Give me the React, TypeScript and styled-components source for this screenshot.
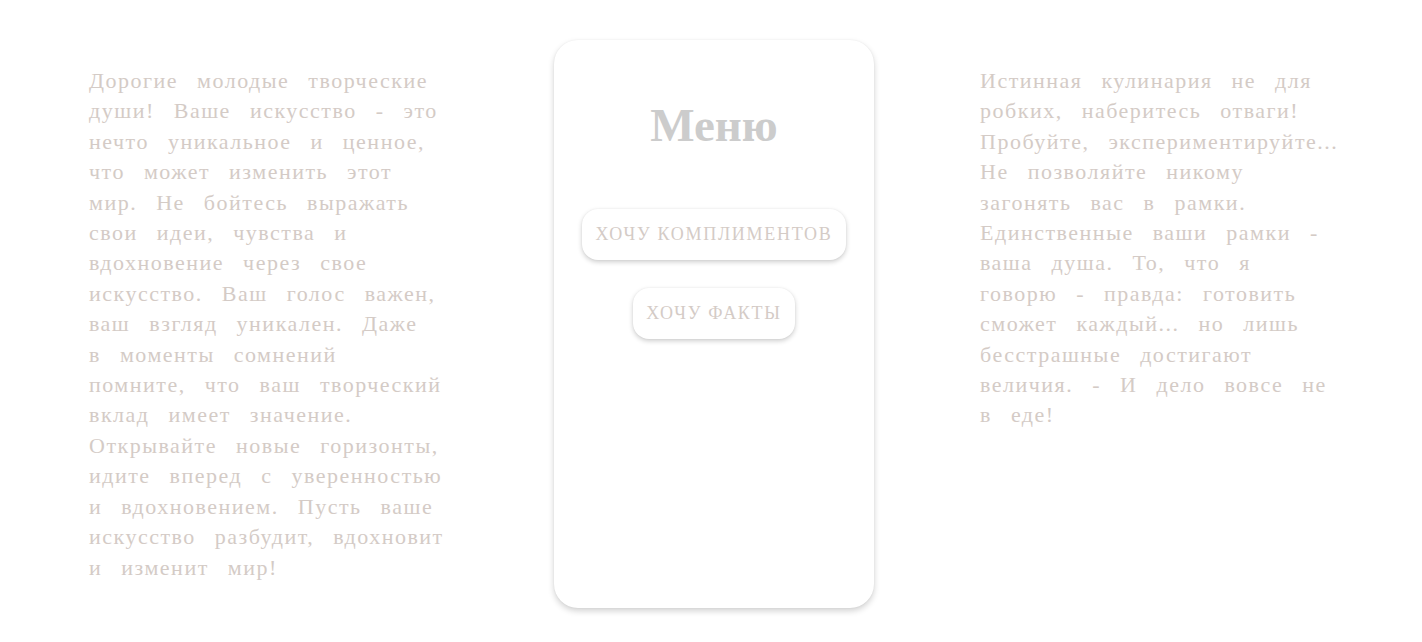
import styled, { createGlobalStyle } from "styled-components";

const GlobalStyle = createGlobalStyle`
  html, body {
    margin: 0;
    padding: 0;
    background: #ffffff;
  }
  body {
    font-family: "Liberation Serif", "DejaVu Serif", serif;
  }
`;

const Page = styled.div`
  display: flex;
  align-items: flex-start;
  padding: 40px 0 0 89px;
  min-height: 642px;
  box-sizing: border-box;
`;

const Prose = styled.p<{ $side: "left" | "right" }>`
  width: 362px;
  margin: 26px 0 0;
  margin-right: ${(p) => (p.$side === "left" ? "103px" : "0")};
  margin-left: ${(p) => (p.$side === "right" ? "106px" : "0")};
  font-family: "Liberation Serif", serif;
  font-size: 22px;
  line-height: 30.4px;
  letter-spacing: 1.5px;
  word-spacing: 12px;
  color: #d4cbc6;
`;

const Line = styled.span`
  display: block;
  white-space: nowrap;
`;

const Card = styled.div`
  width: 320px;
  height: 568px;
  flex-shrink: 0;
  display: flex;
  flex-direction: column;
  align-items: center;
  padding-top: 60px;
  box-sizing: border-box;
  background: #ffffff;
  border-radius: 24px;
  box-shadow: 0 3px 6px rgba(0, 0, 0, 0.18), 0 0 2px rgba(0, 0, 0, 0.06);
`;

const Title = styled.h1`
  margin: 0;
  font-family: "Liberation Serif", serif;
  font-weight: bold;
  font-size: 47px;
  line-height: 50px;
  color: #cccccc;
`;

const Actions = styled.div`
  display: flex;
  flex-direction: column;
  align-items: center;
  gap: 28px;
  margin-top: 59px;
`;

const MenuButton = styled.button`
  height: 51px;
  padding: 0 13px;
  border: none;
  border-radius: 16px;
  background: #ffffff;
  box-shadow: 0 2px 5px rgba(0, 0, 0, 0.2), 0 0 2px rgba(0, 0, 0, 0.05);
  font-family: "Liberation Serif", serif;
  font-size: 18px;
  letter-spacing: 1.7px;
  text-transform: uppercase;
  color: #d4cbc6;
  cursor: pointer;
`;

const leftLines = [
  "Дорогие молодые творческие",
  "души! Ваше искусство - это",
  "нечто уникальное и ценное,",
  "что может изменить этот",
  "мир. Не бойтесь выражать",
  "свои идеи, чувства и",
  "вдохновение через свое",
  "искусство. Ваш голос важен,",
  "ваш взгляд уникален. Даже",
  "в моменты сомнений",
  "помните, что ваш творческий",
  "вклад имеет значение.",
  "Открывайте новые горизонты,",
  "идите вперед с уверенностью",
  "и вдохновением. Пусть ваше",
  "искусство разбудит, вдохновит",
  "и изменит мир!",
];

const rightLines = [
  "Истинная кулинария не для",
  "робких, наберитесь отваги!",
  "Пробуйте, экспериментируйте...",
  "Не позволяйте никому",
  "загонять вас в рамки.",
  "Единственные ваши рамки -",
  "ваша душа. То, что я",
  "говорю - правда: готовить",
  "сможет каждый... но лишь",
  "бесстрашные достигают",
  "величия. - И дело вовсе не",
  "в еде!",
];

export default function App() {
  return (
    <>
      <GlobalStyle />
      <Page>
        <Prose $side="left">
          {leftLines.map((l) => (
            <Line key={l}>{l}</Line>
          ))}
        </Prose>
        <Card>
          <Title>Меню</Title>
          <Actions>
            <MenuButton>Хочу комплиментов</MenuButton>
            <MenuButton>Хочу факты</MenuButton>
          </Actions>
        </Card>
        <Prose $side="right">
          {rightLines.map((l) => (
            <Line key={l}>{l}</Line>
          ))}
        </Prose>
      </Page>
    </>
  );
}
